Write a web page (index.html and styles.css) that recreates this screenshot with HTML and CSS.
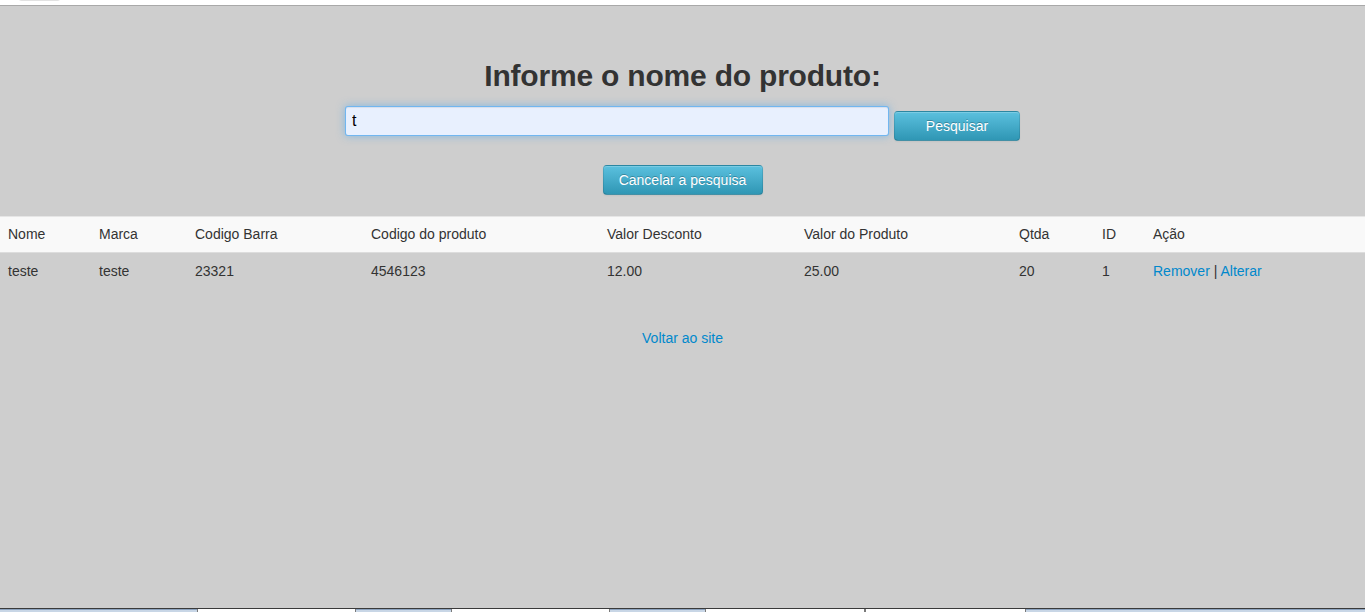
FILE: index.html
```html
<!DOCTYPE html>
<html lang="pt">
<head>
<meta charset="utf-8">
<title>Pesquisa de produto</title>
<link rel="stylesheet" href="styles.css">
</head>
<body>
<div class="topbar"><span class="toptab"></span></div>
<main class="main">
  <h1 class="title">Informe o nome do produto:</h1>
  <form class="search">
    <input class="search-input" type="text" value="t">
    <button class="btn btn-search" type="button">Pesquisar</button>
  </form>
  <div class="cancel-row"><button class="btn btn-cancel" type="button">Cancelar a pesquisa</button></div>
  <table class="grid">
    <thead>
      <tr>
        <th class="c1">Nome</th><th class="c2">Marca</th><th class="c3">Codigo Barra</th><th class="c4">Codigo do produto</th><th class="c5">Valor Desconto</th><th class="c6">Valor do Produto</th><th class="c7">Qtda</th><th class="c8">ID</th><th>Ação</th>
      </tr>
    </thead>
    <tbody>
      <tr>
        <td>teste</td><td>teste</td><td>23321</td><td>4546123</td><td>12.00</td><td>25.00</td><td>20</td><td>1</td><td><a href="#">Remover</a> | <a href="#">Alterar</a></td>
      </tr>
    </tbody>
  </table>
  <div class="back"><a href="#">Voltar ao site</a></div>
</main>
<div class="taskbar">
  <span class="tb tb-a w197"></span><span class="tb tb-b w159"></span><span class="tb tb-a w95"></span><span class="tb tb-b w159"></span><span class="tb tb-a w95"></span><span class="tb tb-b w160"></span><span class="tb tb-b w161"></span><span class="tb tb-a grow"></span>
</div>
</body>
</html>
```
FILE: styles.css
```css
html, body { height: 100%; }
body {
  margin: 0;
  background: #cecece;
  font-family: "Liberation Sans", Arial, Helvetica, sans-serif;
  font-size: 14px;
  line-height: 20px;
  color: #333;
  display: flex;
  flex-direction: column;
}
.topbar {
  height: 5px;
  background: #fff;
  border-bottom: 1px solid #a9a9a9;
  position: relative;
}
.toptab {
  position: absolute;
  left: 17px;
  top: -4px;
  width: 45px;
  height: 5px;
  border: 1px solid #e2e2e2;
  border-top: none;
  border-radius: 0 0 6px 6px;
  box-sizing: border-box;
}
.main { flex: 1; }
.title {
  margin: 50px 0 0;
  text-align: center;
  font-size: 30px;
  letter-spacing: -0.2px;
  line-height: 40px;
  font-weight: bold;
  color: #333;
}
.search {
  display: flex;
  justify-content: center;
  align-items: flex-start;
  margin: 10px 0 0;
  gap: 5px;
}
.search-input {
  width: 544px;
  height: 30px;
  box-sizing: border-box;
  padding: 4px 6px;
  font-family: "Liberation Sans", Arial, sans-serif;
  font-size: 16px;
  color: #000;
  background: #e8f0fe;
  border: 1px solid rgba(82, 168, 236, 0.8);
  border-radius: 3px;
  box-shadow: inset 0 1px 1px rgba(0, 0, 0, 0.075), 0 0 8px rgba(82, 168, 236, 0.6);
  outline: none;
  margin: 0;
}
.btn {
  height: 30px;
  box-sizing: border-box;
  font-family: "Liberation Sans", Arial, sans-serif;
  font-size: 14px;
  line-height: 20px;
  color: #fff;
  text-shadow: 0 -1px 0 rgba(0, 0, 0, 0.25);
  background: linear-gradient(to bottom, #5bc0de, #2f96b4);
  border: 1px solid #2d8ba7;
  border-color: rgba(0, 0, 0, 0.1) rgba(0, 0, 0, 0.1) rgba(0, 0, 0, 0.25);
  border-radius: 4px;
  box-shadow: inset 0 1px 0 rgba(255, 255, 255, 0.2), 0 1px 2px rgba(0, 0, 0, 0.05);
  padding: 4px 12px;
  margin: 0;
  cursor: pointer;
}
.btn-search { width: 126px; margin-top: 5px; }
.btn-cancel { width: 160px; }
.cancel-row {
  display: flex;
  justify-content: center;
  margin-top: 24px;
}
.grid {
  width: 100%;
  border-collapse: collapse;
  border-spacing: 0;
  margin-top: 21px;
}
.grid th, .grid td {
  padding: 8px;
  text-align: left;
  font-weight: normal;
  vertical-align: top;
  border-top: 1px solid #dddddd;
}
.grid th { padding: 7px 8px 8px; }
.grid thead tr { background: #f9f9f9; }
.grid thead th { border-top: 1px solid #e6e6e6; }
.c1 { width: 75px; }
.c2 { width: 80px; }
.c3 { width: 160px; }
.c4 { width: 220px; }
.c5 { width: 181px; }
.c6 { width: 199px; }
.c7 { width: 67px; }
.c8 { width: 35px; }
a { color: #0088cc; text-decoration: none; }
.back {
  text-align: center;
  margin-top: 39px;
}
.taskbar {
  display: flex;
  height: 4px;
  border-top: 1px solid #3a3a3a;
  box-sizing: border-box;
}
.tb { height: 3px; box-sizing: border-box; }
.tb-a { background: #c8d6e6; border-top: 1px solid #8ca2bd; }
.tb-b { background: #ffffff; border-left: 1px solid #7a7a7a; border-right: 1px solid #7a7a7a; }
.w197 { width: 197px; }
.w159 { width: 159px; }
.w95 { width: 95px; }
.w160 { width: 160px; }
.w161 { width: 161px; }
.grow { flex: 1; }
```
